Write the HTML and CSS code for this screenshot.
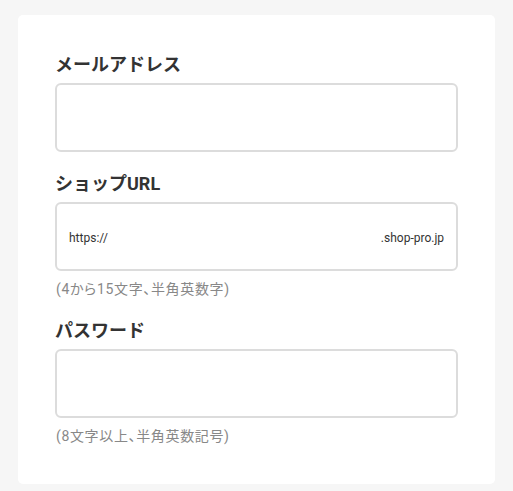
FILE: index.html
```html
<!DOCTYPE html>
<html lang="ja">
<head>
<meta charset="utf-8">
<link rel="stylesheet" href="styles.css">
</head>
<body>
<div class="page">
  <form class="card">
    <div class="field">
      <label class="label">メールアドレス</label>
      <div class="input"></div>
    </div>
    <div class="field">
      <label class="label">ショップURL</label>
      <div class="input url">
        <span class="prefix">https://</span>
        <span class="suffix">.shop-pro.jp</span>
      </div>
      <p class="hint">(4から15文字、半角英数字)</p>
    </div>
    <div class="field">
      <label class="label">パスワード</label>
      <div class="input"></div>
      <p class="hint">(8文字以上、半角英数記号)</p>
    </div>
  </form>
</div>
</body>
</html>
```
FILE: styles.css
```css
html, body {
  margin: 0;
  padding: 0;
  background: #f6f6f6;
}
body {
  font-family: Roboto, "Noto Sans CJK JP", sans-serif;
  color: #333;
}
.page {
  padding: 15px 18px 8px 18px;
}
.card {
  display: flex;
  flex-direction: column;
  gap: 20px;
  background: #fff;
  border-radius: 5px;
  padding: 38px 37px 38px 37px;
}
.field {
  display: flex;
  flex-direction: column;
}
.label {
  font-family: Roboto, "Noto Sans CJK JP", sans-serif;
  font-weight: 700;
  font-size: 18px;
  line-height: 24px;
  color: #333;
  margin-bottom: 6px;
}
.input {
  box-sizing: border-box;
  height: 69px;
  border: 2px solid #dcdcdc;
  border-radius: 6px;
  background: #fff;
}
.url {
  display: flex;
  align-items: center;
  justify-content: space-between;
  padding: 2px 12px 0 12px;
  font-family: Roboto, sans-serif;
  font-size: 12px;
  color: #333;
}
.hint {
  margin: 8px 0 0 0;
  font-size: 14px;
  line-height: 20px;
  color: #888;
  font-feature-settings: "palt";
  letter-spacing: 0.65px;
  padding-left: 1px;
}
```
